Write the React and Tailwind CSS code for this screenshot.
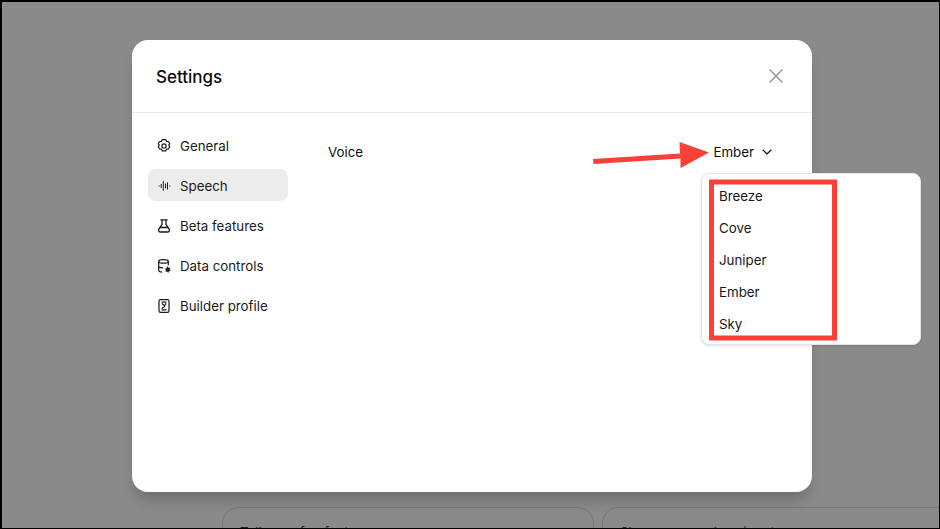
import React from "react";
import { X, ChevronDown } from "lucide-react";

const nav = [
  { label: "General", icon: "gear" },
  { label: "Speech", icon: "speech", active: true },
  { label: "Beta features", icon: "flask" },
  { label: "Data controls", icon: "data" },
  { label: "Builder profile", icon: "builder" },
];

function NavIcon({ name }) {
  const common = { width: 16, height: 16, viewBox: "0 0 16 16", fill: "none", stroke: "#1a1a1a", strokeWidth: 1.2, strokeLinecap: "round", strokeLinejoin: "round" };
  if (name === "gear")
    return (
      <svg {...common}>
        <path d="M6.3 1.6h3.4l.8 1.7 1.9.2 1.3 2-.9 1.6.9 1.9-1.3 2-1.9.2-.8 1.7H6.3l-.8-1.7-1.9-.2-1.3-2 .9-1.9-.9-1.6 1.3-2 1.9-.2z" />
        <circle cx="8" cy="7.9" r="2.1" />
      </svg>
    );
  if (name === "speech")
    return (
      <svg {...common} strokeWidth={1}>
        <path d="M3 8h.3M5.2 6.4v3.2M7.3 3.6v8.8M9.5 6v4M11.5 4.8v6.4M13.6 8h.3" />
      </svg>
    );
  if (name === "flask")
    return (
      <svg {...common} strokeWidth={1.3}>
        <path d="M4.8 1.8h6.4M6 1.8v4.6L2.9 11.2c-.8 1.3 0 2.8 1.6 2.8h7c1.6 0 2.4-1.5 1.6-2.8L10 6.4V1.8M4.2 9.5h7.6" />
      </svg>
    );
  if (name === "data")
    return (
      <svg {...common}>
        <ellipse cx="7.5" cy="3.4" rx="4.8" ry="1.8" />
        <path d="M2.7 3.4v9.2c0 .8 1 1.3 3 1.5M12.3 3.4v3.4M2.7 8c0 .9 1.5 1.7 4 1.8" />
        <path d="M11.5 8.8l.9 1.3 1.5-.1-.5 1.5.9 1.2-1.5.3-.6 1.4-.9-1.2-1.5.1.4-1.4-.8-1.2 1.4-.5z" fill="#1a1a1a" strokeWidth={0.6} />
      </svg>
    );
  return (
    <svg {...common}>
      <rect x="3" y="1.6" width="10" height="12.8" rx="1.6" />
      <path d="M6 4.2h4M6.2 5.6c0 1.4 2.6 1.2 2.6 2.4S6.2 9.2 6.2 10.4M9.8 5.6c0 1-1 1.4-1 1.8M6 11.8h4" />
    </svg>
  );
}

export default function App() {
  return (
    <div className="relative h-[529px] w-[940px] overflow-hidden border-t-2 border-r border-b border-l-2 border-black bg-[#8a8a8a] font-['Inter',sans-serif] text-[#0d0d0d]">
      {/* page behind the overlay */}
      <div className="flex h-full items-end gap-2 pl-[220px]">
        <div className="-mb-[31px] h-[52px] w-[372px] shrink-0 rounded-t-2xl border border-[#767676] px-[17px] pt-[15px] text-[13.3px] text-black/80">Tell me a fun fact</div>
        <div className="-mb-[31px] h-[52px] w-[372px] shrink-0 rounded-t-2xl border border-[#767676] px-[17px] pt-[15px] text-[13.3px] text-black/80">Show me a code snippet</div>
      </div>

      {/* modal */}
      <div className="absolute left-[130px] top-[38px] h-[452px] w-[680px] rounded-2xl bg-white shadow-[0_12px_14px_-4px_rgba(0,0,0,0.2)]">
        <div className="flex h-[73px] items-center justify-between border-b border-[#e6e6e6] pl-6 pr-[24px]">
          <h2 className="mt-[2px] text-[17px] font-medium leading-6 text-[#0d0d0d]">Settings</h2>
          <X size={24} strokeWidth={1.6} className="text-[#9b9b9b]" />
        </div>
        <div className="flex pl-4 pt-4">
          <nav className="flex w-[140px] flex-col gap-2">
            {nav.map((n) => (
              <div
                key={n.label}
                className={`flex h-8 items-center gap-2 rounded-lg px-2 pt-[1px] text-[13.3px] leading-5 text-[#1a1a1a] ${n.active ? "bg-[#ececec]" : ""}`}
              >
                <NavIcon name={n.icon} />
                <span>{n.label}</span>
              </div>
            ))}
          </nav>
          <div className="flex h-10 flex-1 items-center justify-between pl-10 pr-[37px] pt-[6px] text-[13.3px] leading-5">
            <span>Voice</span>
            <span className="flex items-center gap-[5px]">
              Ember
              <ChevronDown size={16} strokeWidth={1.6} />
            </span>
          </div>
        </div>
      </div>

      {/* dropdown */}
      <div className="absolute left-[699px] top-[171px] flex h-[172px] w-[220px] flex-col rounded-lg border border-[#e5e5e5] bg-white pt-[6px] text-[13.3px] leading-8 text-[#171717] shadow-sm">
        {["Breeze", "Cove", "Juniper", "Ember", "Sky"].map((v) => (
          <div key={v} className="h-8 pl-[17px]">{v}</div>
        ))}
      </div>

      {/* annotations */}
      <svg className="pointer-events-none absolute -left-[2px] -top-[2px]" width="940" height="529">
        <rect x="711.5" y="182" width="123" height="156" fill="none" stroke="#fb4137" strokeWidth="5" />
        <path d="M593 159 L680 153.5 L679.5 142 L709 152.5 L680.5 168 L680.5 158.5 L593.5 164 Z" fill="#fb4137" />
      </svg>
    </div>
  );
}
